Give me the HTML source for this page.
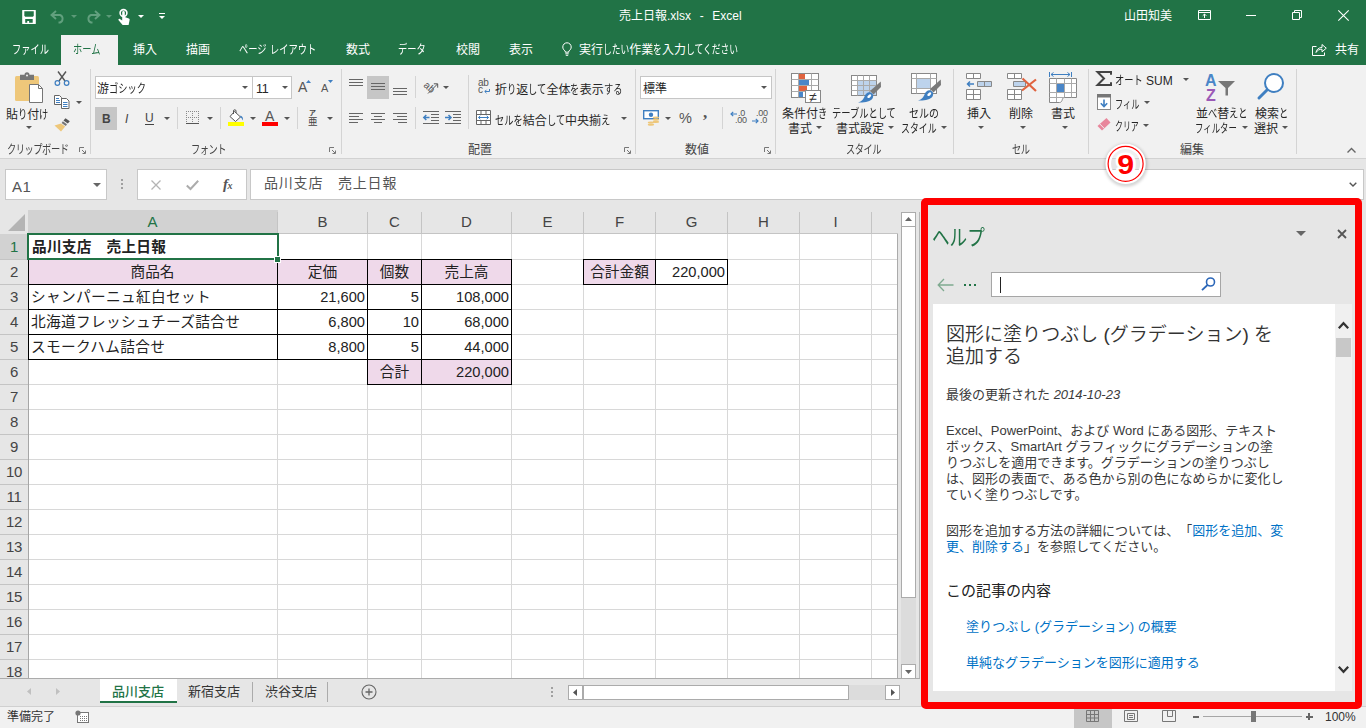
<!DOCTYPE html>
<html lang="ja">
<head>
<meta charset="utf-8">
<title>売上日報.xlsx - Excel</title>
<style>
*{box-sizing:border-box;margin:0;padding:0}
html,body{width:1366px;height:728px;overflow:hidden;background:#e6e6e6}
body{font-family:"Liberation Sans","Noto Sans CJK JP",sans-serif;font-size:12px;color:#262626;position:relative}
.a{position:absolute}
.t{position:absolute;white-space:nowrap;line-height:1}
svg{position:absolute;overflow:visible}
.k{display:inline-block;transform:scaleX(.77);transform-origin:0 50%}
.tab{position:absolute;top:43px;font-size:12px;color:#fff;white-space:nowrap;line-height:14px}
/* title */
#title{left:0;top:0;width:1366px;height:65px;background:#217346}
#title .t{color:#fff}
#hometab{left:61px;top:35px;width:57px;height:30px;background:#f1f1f1}
/* ribbon */
#ribbon{left:0;top:65px;width:1366px;height:94px;background:#f1f1f1;border-bottom:1px solid #d2d2d2}
.sep{position:absolute;width:1px;background:#d6d6d6;top:70px;height:85px}
.box{position:absolute;background:#fff;border:1px solid #c6c6c6}
.rt{position:absolute;white-space:nowrap;line-height:1;font-size:12px;color:#262626;letter-spacing:-0.6px}
.gl{position:absolute;white-space:nowrap;line-height:1;font-size:12px;color:#444;letter-spacing:-0.6px}
.dd{position:absolute;width:0;height:0;border-left:3px solid transparent;border-right:3px solid transparent;border-top:3px solid #555}
.lau{position:absolute;width:7px;height:7px}
.vs{position:absolute;width:1px;background:#d4d4d4}
.sel{position:absolute;background:#c6c6c6}
/* formula bar */
#fbar{left:0;top:159px;width:1366px;height:46px;background:#e6e6e6}
/* grid */
#grid{left:0;top:205px;width:920px;height:473px;background:#e6e6e6}
.ch{position:absolute;top:211px;height:22px;font-size:15px;color:#333;text-align:center;line-height:22px;border-right:1px solid #c8c8c8}
.rh{position:absolute;left:0;width:28px;height:25px;font-size:15px;color:#333;text-align:center;line-height:25px;border-bottom:1px solid #c8c8c8;letter-spacing:-0.5px}
.cell{position:absolute;height:25px;line-height:26px;font-size:14.67px;color:#222;white-space:nowrap;font-family:"Liberation Sans","Noto Sans CJK JP",sans-serif}
.b{font-weight:bold;padding-left:4px;letter-spacing:.25px}.l{padding-left:3px;letter-spacing:.35px}
.num{text-align:right;padding-right:2px}
.ctr{text-align:center}
.bl{position:absolute;background:#000}
/* help */
#helpborder{left:921px;top:198px;width:441px;height:511px;border:7px solid #fe0000;border-radius:5px;background:none;z-index:5}
#helpwhite{left:933px;top:304px;width:402px;height:387px;background:#fff}
#helpsb{left:1335px;top:304px;width:17px;height:387px;background:#f0f0f0}
.h{position:absolute;white-space:nowrap;line-height:1;color:#3a3a3a;font-size:13px;letter-spacing:0;text-spacing-trim:space-all}
.lnk{color:#0072c6}
/* bottom */
#tabs{left:0;top:678px;width:920px;height:28px;background:#e6e6e6;border-top:1px solid #ababab}
#status{left:0;top:706px;width:1366px;height:22px;background:#f1f1f1;border-top:1px solid #d0d0d0}
</style>
</head>
<body>
<!-- TITLE BAR -->
<div id="title" class="a"></div>
<div id="hometab" class="a"></div>

<!-- quick access -->
<svg class="a" style="left:22px;top:10px" width="14" height="14" viewBox="0 0 14 14.400"><rect x="0" y="0" width="14" height="14.400" rx=".6" fill="#fff"/><path d="M2.200 1.400H11.900V5.800L11 6.900H3.100L2.200 5.800Z" fill="#217346"/><path d="M3.100 9.300H10.800V13H7.100V11.400H5.200V13H3.100Z" fill="#217346"/></svg>
<svg class="a" style="left:50px;top:10px" width="16" height="13" viewBox="0 0 16 13"><path d="M6 1L1.5 5L6 9M1.5 5H10A4 4 0 0 1 10 12.5H8.5" fill="none" stroke="#62a07e" stroke-width="1.900"/></svg>
<div class="dd" style="left:71px;top:15px;border-top-color:#5c9a78"></div>
<svg class="a" style="left:85px;top:10px" width="16" height="13" viewBox="0 0 16 13"><path d="M10 1L14.5 5L10 9M14.5 5H6A4 4 0 0 0 6 12.5H7.5" fill="none" stroke="#62a07e" stroke-width="1.900"/></svg>
<div class="dd" style="left:106px;top:15px;border-top-color:#5c9a78"></div>
<svg class="a" style="left:117px;top:8px" width="14" height="18" viewBox="0 0 14 18"><circle cx="6.5" cy="5" r="3.4" fill="none" stroke="#fff" stroke-width="1.6"/><path d="M5.2 4.2a1.3 1.3 0 0 1 2.6 0V9l4 1.4c.8.3 1 .9.8 1.7L11.6 17H5.6L1.6 12.2c-.6-.8.4-1.8 1.3-1.2L5.2 12.6Z" fill="#fff"/></svg>
<div class="dd" style="left:138px;top:15px;border-top-color:#fff"></div>
<div class="a" style="left:159px;top:13px;width:6px;height:1px;background:#fff"></div>
<div class="dd" style="left:159px;top:16px;border-top-color:#fff"></div>
<!-- title text -->
<div class="t" style="left:619px;top:9px;font-size:12px;color:#fff;line-height:15px;word-spacing:1px">売上日報.xlsx&nbsp; -&nbsp; Excel</div>
<div class="t" style="left:1124px;top:9px;font-size:12px;color:#fff;line-height:14px">山田知美</div>
<svg class="a" style="left:1198px;top:10px" width="13" height="10" viewBox="0 0 13 10"><path d="M.5 .5H12.5V9.5H.5ZM.5 2.5H12.5M6.5 8V4M4.7 5.8L6.5 4L8.3 5.8" fill="none" stroke="#fff" stroke-width="1"/></svg>
<div class="a" style="left:1246px;top:15px;width:10px;height:1px;background:#fff"></div>
<svg class="a" style="left:1292px;top:10px" width="10" height="10" viewBox="0 0 10 10"><path d="M.5 2.5H7.5V9.5H.5ZM2.5 2.5V.5H9.5V7.5H7.5" fill="none" stroke="#fff" stroke-width="1"/></svg>
<svg class="a" style="left:1338px;top:10px" width="11" height="11" viewBox="0 0 11 11"><path d="M.3 .3L10.7 10.7M10.7 .3L.3 10.7" fill="none" stroke="#fff" stroke-width="1.1"/></svg>
<!-- tabs -->
<div class="tab" style="left:12px"><span class="k" style="margin-right:-0.92em">ファイル</span></div>
<div class="tab" style="left:73px;color:#217346"><span class="k" style="margin-right:-0.69em">ホーム</span></div>
<div class="tab" style="left:133px">挿入</div>
<div class="tab" style="left:186px">描画</div>
<div class="tab" style="left:239px"><span class="k" style="margin-right:-0.69em">ページ</span>&nbsp;<span class="k" style="margin-right:-1.15em">レイアウト</span></div>
<div class="tab" style="left:346px">数式</div>
<div class="tab" style="left:398px"><span class="k" style="margin-right:-0.69em">データ</span></div>
<div class="tab" style="left:456px">校閲</div>
<div class="tab" style="left:509px">表示</div>
<svg class="a" style="left:562px;top:42px" width="10" height="14" viewBox="0 0 10 14"><path d="M3.2 10.2V9C1.6 8 .8 6.600 .8 5A4.200 4.200 0 0 1 9.200 5C9.200 6.600 8.400 8 6.800 9V10.200ZM3.300 11.800H6.700M3.800 13.300H6.200" fill="none" stroke="#fff" stroke-width="1"/></svg>
<div class="tab" style="left:579px">実行<span class="k" style="transform:scaleX(0.73);margin-right:-0.81em">したい</span>作業<span class="k" style="transform:scaleX(0.73);margin-right:-0.27em">を</span>入力<span class="k" style="transform:scaleX(0.73);margin-right:-1.62em">してください</span></div>
<svg class="a" style="left:1312px;top:43px" width="15" height="13" viewBox="0 0 15 13"><path d="M4.500 3.500H.5V12.500H12.500V9.500M4 9.500C4.500 6 7 4.500 10 4.500V1.500L14.300 5.200L10 8.800V6.200C7.500 6.200 5.500 7 4 9.500Z" fill="none" stroke="#fff" stroke-width="1"/></svg>
<div class="tab" style="left:1335px">共有</div>
<!--TITLE-CONTENT-->

<!-- RIBBON -->
<div id="ribbon" class="a"></div>

<!-- clipboard group -->
<svg class="a" style="left:15px;top:73px" width="29" height="30" viewBox="0 0 29 30"><rect x="0" y="3" width="24" height="25" rx="1.500" fill="#eec77a"/><path d="M5 1.800H9.500A2.500 2.500 0 0 1 14.500 1.800H19V7H5Z" fill="#767676"/><circle cx="12" cy="2.600" r="1" fill="#f1f1f1"/><path d="M14.500 11.500H23.500L27.500 15.500V29.500H14.500Z" fill="#fff" stroke="#767676" stroke-width="1"/><path d="M23.500 11.500V15.500H27.500" fill="none" stroke="#767676" stroke-width="1"/></svg>
<div class="rt" style="left:6px;top:109px;letter-spacing:0">貼<span class="k" style="margin-right:-0.23em">り</span>付<span class="k" style="margin-right:-0.23em">け</span></div>
<div class="dd" style="left:26px;top:126px"></div>
<svg class="a" style="left:54px;top:71px" width="16" height="15" viewBox="0 0 16 15"><path d="M4 .5L11 10M12 .5L5 10" fill="none" stroke="#555" stroke-width="1.400"/><circle cx="3.400" cy="12" r="2.300" fill="none" stroke="#3f7fc1" stroke-width="1.200"/><circle cx="12.600" cy="12" r="2.300" fill="none" stroke="#3f7fc1" stroke-width="1.200"/></svg>
<svg class="a" style="left:54px;top:95px" width="16" height="14" viewBox="0 0 16 14"><path d="M.5 .5H5.500L7.500 2.500V9.500H.5Z" fill="#fff" stroke="#666" stroke-width="1"/><path d="M2 3.500H5M2 5.500H6M2 7.500H6" stroke="#3f7fc1" stroke-width="1"/><path d="M7.500 3.500H12.500L15 6V13.500H7.500Z" fill="#fff" stroke="#666" stroke-width="1"/><path d="M9 7.500H13.500M9 9.500H13.500M9 11.500H13.500" stroke="#3f7fc1" stroke-width="1"/></svg>
<div class="dd" style="left:76px;top:101px"></div>
<svg class="a" style="left:54px;top:117px" width="17" height="15" viewBox="0 0 17 15"><path d="M11.500 1.200L15.800 4.300L13.800 6.600L9.500 3.500Z" fill="#555"/><path d="M8.800 4.200L13 7.300L11.800 9L7.600 5.900Z" fill="#777"/><path d="M7 6.500L11.200 9.600L7 14.500L.5 8.500Z" fill="#eec77a"/></svg>
<div class="gl" style="left:7px;top:144px"><span class="k" style="margin-right:-1.61em">クリップボード</span></div>
<svg class="a" style="left:79px;top:147px" width="7" height="7" viewBox="0 0 7 7"><path d="M.5 5V.5H5" fill="none" stroke="#777" stroke-width="1"/><path d="M3 3L6 6M6.5 3.500V6.500H3.500" fill="none" stroke="#777" stroke-width="1"/></svg>
<div class="vs" style="left:90px;top:69px;height:85px"></div>
<!-- font group -->
<div class="box" style="left:95px;top:76px;width:158px;height:23px"></div>
<div class="box" style="left:252px;top:76px;width:40px;height:23px"></div>
<div class="rt" style="left:97px;top:83px;letter-spacing:0">游<span class="k" style="margin-right:-0.92em">ゴシック</span></div>
<div class="dd" style="left:242px;top:86px"></div>
<div class="rt" style="left:256px;top:83px;font-size:12.500px;letter-spacing:-.3px">11</div>
<div class="dd" style="left:282px;top:86px"></div>
<div class="rt" style="left:298px;top:80px;font-size:14px;letter-spacing:0;color:#555">A</div>
<svg class="a" style="left:306px;top:80px" width="5" height="3" viewBox="0 0 5 3"><path d="M0 3L2.500 0L5 3Z" fill="#3f7fc1"/></svg>
<div class="rt" style="left:321px;top:83px;font-size:11px;letter-spacing:0;color:#555">A</div>
<svg class="a" style="left:328px;top:80px" width="5" height="3" viewBox="0 0 5 3"><path d="M0 0L2.500 3L5 0Z" fill="#3f7fc1"/></svg>
<div class="sel" style="left:95px;top:107px;width:22px;height:23px"></div>
<div class="rt" style="left:102px;top:113px;font-size:12px;font-weight:bold;letter-spacing:0;color:#444">B</div>
<div class="rt" style="left:125px;top:113px;font-size:12px;font-style:italic;letter-spacing:0;color:#444">I</div>
<div class="rt" style="left:145px;top:113px;font-size:12px;letter-spacing:0;color:#444;border-bottom:1px solid #444;padding-bottom:0;line-height:11px">U</div>
<div class="dd" style="left:164px;top:117px"></div>
<div class="vs" style="left:177px;top:107px;height:22px"></div>
<svg class="a" style="left:186px;top:111px" width="13" height="13" viewBox="0 0 13 13"><path d="M0 .5H13M0 6.500H13M.5 0V12M6.500 0V12M12.500 0V12" fill="none" stroke="#8a8a8a" stroke-width="1" stroke-dasharray="1 1" shape-rendering="crispEdges"/><path d="M0 12.500H13" stroke="#555" stroke-width="1"/></svg>
<div class="dd" style="left:207px;top:117px"></div>
<div class="vs" style="left:220px;top:107px;height:22px"></div>
<svg class="a" style="left:228px;top:110px" width="17" height="16" viewBox="0 0 17 16"><path d="M6.500 1.500L12.500 7L7.500 11.500L2 6.500Z" fill="#fff" stroke="#555" stroke-width="1"/><path d="M5.500 4V1A1.200 1.200 0 0 1 8 1V3" fill="none" stroke="#555" stroke-width="1"/><path d="M12.500 5.500C15 6.500 15.500 9 14.500 10.500C14 8.500 13.500 7.800 12 7.200Z" fill="#3f7fc1"/><rect x="0" y="12" width="16" height="4" fill="#ffff00"/></svg>
<div class="dd" style="left:250px;top:117px"></div>
<div class="rt" style="left:265px;top:109px;font-size:14px;letter-spacing:0;color:#555">A</div>
<div class="a" style="left:262px;top:122px;width:16px;height:4px;background:#ff0000"></div>
<div class="dd" style="left:284px;top:117px"></div>
<div class="vs" style="left:297px;top:107px;height:22px"></div>
<div class="rt" style="left:309px;top:109px;font-size:7px;letter-spacing:0;color:#444;font-weight:bold">ア</div>
<div class="rt" style="left:308px;top:117px;font-size:9.500px;letter-spacing:0;color:#444">亜</div>
<div class="dd" style="left:327px;top:117px"></div>
<div class="gl" style="left:191px;top:144px"><span class="k" style="margin-right:-0.92em">フォント</span></div>
<svg class="a" style="left:329px;top:147px" width="7" height="7" viewBox="0 0 7 7"><path d="M.5 5V.5H5" fill="none" stroke="#777" stroke-width="1"/><path d="M3 3L6 6M6.5 3.500V6.500H3.500" fill="none" stroke="#777" stroke-width="1"/></svg>
<div class="vs" style="left:341px;top:69px;height:85px"></div>

<!-- alignment group -->
<div class="a" style="left:349px;top:79px;width:14px;height:1px;background:#666"></div><div class="a" style="left:349px;top:82px;width:14px;height:1px;background:#666"></div><div class="a" style="left:349px;top:85px;width:14px;height:1px;background:#666"></div>
<div class="sel" style="left:367px;top:76px;width:22px;height:23px"></div>
<div class="a" style="left:371px;top:83px;width:14px;height:1px;background:#666"></div><div class="a" style="left:371px;top:86px;width:14px;height:1px;background:#666"></div><div class="a" style="left:371px;top:89px;width:14px;height:1px;background:#666"></div><div class="a" style="left:393px;top:88px;width:14px;height:1px;background:#666"></div><div class="a" style="left:393px;top:91px;width:14px;height:1px;background:#666"></div><div class="a" style="left:393px;top:94px;width:14px;height:1px;background:#666"></div>
<div class="vs" style="left:415px;top:76px;height:22px"></div>
<svg class="a" style="left:423px;top:79px" width="17" height="16" viewBox="0 0 17 16"><text x="0" y="0" font-size="10" font-family="Liberation Sans,sans-serif" fill="#555" transform="translate(0 7) rotate(42)">ab</text><path d="M5 14.500L14.500 5M10.800 4.800L14.700 4.800L14.700 8.700" fill="none" stroke="#555" stroke-width="1"/></svg>
<div class="dd" style="left:443px;top:86px"></div>
<div class="vs" style="left:468px;top:75px;height:54px"></div>
<div class="a" style="left:349px;top:113px;width:14px;height:1px;background:#666"></div><div class="a" style="left:349px;top:116px;width:10px;height:1px;background:#666"></div><div class="a" style="left:349px;top:119px;width:14px;height:1px;background:#666"></div><div class="a" style="left:349px;top:122px;width:9px;height:1px;background:#666"></div><div class="a" style="left:371px;top:113px;width:14px;height:1px;background:#666"></div><div class="a" style="left:374px;top:116px;width:8px;height:1px;background:#666"></div><div class="a" style="left:371px;top:119px;width:14px;height:1px;background:#666"></div><div class="a" style="left:374px;top:122px;width:8px;height:1px;background:#666"></div><div class="a" style="left:393px;top:113px;width:14px;height:1px;background:#666"></div><div class="a" style="left:397px;top:116px;width:10px;height:1px;background:#666"></div><div class="a" style="left:393px;top:119px;width:14px;height:1px;background:#666"></div><div class="a" style="left:398px;top:122px;width:9px;height:1px;background:#666"></div>
<div class="vs" style="left:415px;top:107px;height:22px"></div>
<svg class="a" style="left:423px;top:111px" width="16" height="13" viewBox="0 0 16 13"><path d="M0 .5H16M8 3.500H16M8 6.500H16M8 9.500H16M0 12.500H16" stroke="#666" stroke-width="1"/><path d="M6.500 6.500H.8M3.300 4L.8 6.500L3.300 9" fill="none" stroke="#3f7fc1" stroke-width="1.500"/></svg>
<svg class="a" style="left:445px;top:111px" width="16" height="13" viewBox="0 0 16 13"><path d="M0 .5H16M8 3.500H16M8 6.500H16M8 9.500H16M0 12.500H16" stroke="#666" stroke-width="1"/><path d="M0 6.500H6M3.500 4L6 6.500L3.500 9" fill="none" stroke="#3f7fc1" stroke-width="1.500"/></svg>
<div class="rt" style="left:478px;top:79px;font-size:10px;letter-spacing:-.3px;color:#555;line-height:7px">ab<br>c</div>
<svg class="a" style="left:484px;top:89px" width="6" height="5" viewBox="0 0 6 5"><path d="M5.500 0V2.500H1M2.500 .8L.8 2.500L2.500 4.200" fill="none" stroke="#3f7fc1" stroke-width="1"/></svg>
<div class="rt" style="left:495px;top:84px;letter-spacing:0">折<span class="k" style="margin-right:-0.23em">り</span>返<span class="k" style="margin-right:-0.46em">して</span>全体<span class="k" style="margin-right:-0.23em">を</span>表示<span class="k" style="margin-right:-0.46em">する</span></div>
<svg class="a" style="left:476px;top:110px" width="15" height="15" viewBox="0 0 15 15"><path d="M.5 .5H14.500V14.500H.5ZM.5 4.500H14.500M.5 10.500H14.500M5 .5V4.500M10 .5V4.500M5 10.500V14.500M10 10.500V14.500" fill="#fff" stroke="#666" stroke-width="1"/><path d="M2.500 7.500H12.500M4.300 5.800L2.500 7.500L4.300 9.200M10.700 5.800L12.500 7.500L10.700 9.200" fill="none" stroke="#3f7fc1" stroke-width="1"/></svg>
<div class="rt" style="left:495px;top:115px;letter-spacing:0"><span class="k" style="margin-right:-0.69em">セルを</span>結合<span class="k" style="margin-right:-0.46em">して</span>中央揃<span class="k" style="margin-right:-0.23em">え</span></div>
<div class="dd" style="left:621px;top:117px"></div>
<div class="gl" style="left:468px;top:144px;letter-spacing:0">配置</div>
<svg class="a" style="left:624px;top:147px" width="7" height="7" viewBox="0 0 7 7"><path d="M.5 5V.5H5" fill="none" stroke="#777" stroke-width="1"/><path d="M3 3L6 6M6.500 3.500V6.500H3.500" fill="none" stroke="#777" stroke-width="1"/></svg>
<div class="vs" style="left:635px;top:69px;height:85px"></div>
<!-- number group -->
<div class="box" style="left:640px;top:76px;width:132px;height:23px"></div>
<div class="rt" style="left:643px;top:83px;letter-spacing:0">標準</div>
<div class="dd" style="left:761px;top:86px"></div>
<svg class="a" style="left:643px;top:110px" width="17" height="17" viewBox="0 0 17 17"><rect x=".7" y=".7" width="14.600" height="8" fill="#fff" stroke="#3f7fc1" stroke-width="1.400"/><circle cx="8" cy="4.700" r="2.200" fill="#3f7fc1"/><g fill="#eec77a"><ellipse cx="13" cy="7.500" rx="3.200" ry="1.100"/><ellipse cx="13" cy="9.700" rx="3.200" ry="1.100"/><ellipse cx="13" cy="11.900" rx="3.200" ry="1.100"/><ellipse cx="8" cy="12.500" rx="3.200" ry="1.100"/><ellipse cx="8" cy="14.700" rx="3.200" ry="1.100"/></g></svg>
<div class="dd" style="left:665px;top:117px"></div>
<div class="rt" style="left:679px;top:111px;font-size:14.500px;letter-spacing:0;color:#555">%</div>
<div class="rt" style="left:703px;top:104px;font-size:17px;letter-spacing:0;color:#555;font-family:'Liberation Serif',serif;font-weight:bold">,</div>
<div class="vs" style="left:722px;top:107px;height:22px"></div>
<div class="rt" style="left:735px;top:110px;font-size:9px;letter-spacing:-.3px;color:#555;line-height:7px;text-align:right;width:10px">.0<br>.00</div>
<svg class="a" style="left:730px;top:111px" width="7" height="6" viewBox="0 0 7 6"><path d="M7 3H1M3.200 .8L1 3L3.200 5.200" fill="none" stroke="#3f7fc1" stroke-width="1.200"/></svg>
<div class="rt" style="left:756px;top:110px;font-size:9px;letter-spacing:-.3px;color:#555;line-height:7px;text-align:right;width:11px">.00<br>.0</div>
<svg class="a" style="left:752px;top:118px" width="7" height="6" viewBox="0 0 7 6"><path d="M0 3H6M3.800 .8L6 3L3.800 5.200" fill="none" stroke="#3f7fc1" stroke-width="1.200"/></svg>
<div class="gl" style="left:685px;top:144px;letter-spacing:0">数値</div>
<svg class="a" style="left:764px;top:147px" width="7" height="7" viewBox="0 0 7 7"><path d="M.5 5V.5H5" fill="none" stroke="#777" stroke-width="1"/><path d="M3 3L6 6M6.500 3.500V6.500H3.500" fill="none" stroke="#777" stroke-width="1"/></svg>
<div class="vs" style="left:775px;top:69px;height:85px"></div>

<!-- styles group -->
<svg class="a" style="left:791px;top:73px" width="31" height="31" viewBox="0 0 31 31"><rect x=".5" y=".5" width="27" height="24" fill="#fff" stroke="#888"/><path d="M.5 6.500H27.500M.5 12.500H27.500M.5 18.500H27.500M7.500 .5V24.500M20.500 .5V24.500" stroke="#aaa" stroke-width="1" fill="none"/><rect x="8" y="1" width="6" height="5" fill="#e0633f"/><rect x="8" y="7" width="10" height="5" fill="#4a86c8"/><rect x="8" y="13" width="8" height="5" fill="#e0633f"/><rect x="8" y="19" width="4" height="5" fill="#4a86c8"/><rect x="14.500" y="17.500" width="15" height="12" fill="#fff" stroke="#888"/><text x="22" y="28.500" font-size="14" text-anchor="middle" font-family="Liberation Sans,sans-serif" fill="#333">≠</text></svg>
<div class="rt" style="left:782px;top:108px;letter-spacing:0">条件付<span class="k" style="margin-right:-0.23em">き</span></div>
<div class="rt" style="left:788px;top:123px;letter-spacing:0">書式</div>
<div class="dd" style="left:816px;top:126px"></div>
<svg class="a" style="left:851px;top:75px" width="31" height="29" viewBox="0 0 31 29"><rect x=".5" y=".5" width="25" height="20" fill="#fff" stroke="#888"/><rect x="7" y="6" width="18" height="14" fill="#bdd3ec"/><path d="M.5 5.500H25.500M.5 10.500H25.500M.5 15.500H25.500M6.500 .5V20.500M12.500 .5V20.500M18.500 .5V20.500" stroke="#aaa" stroke-width="1" fill="none"/><path d="M29.800 6.500L30 12L22.500 19.500L19 16Z" fill="#7a7a7a"/><path d="M7 27.500C11 26.500 12.500 24 13.500 21.500C14.500 18.500 17 16.800 19.500 17.500C22 18.300 23 21 21.500 23.500C19.500 26.500 13 28 7 27.500Z" fill="#3f7fc1"/><ellipse cx="18.300" cy="21.200" rx="2.300" ry="1.300" fill="#fff" transform="rotate(-40 18.300 21.200)"/></svg>
<div class="rt" style="left:832px;top:108px;letter-spacing:0"><span class="k" style="margin-right:-1.61em">テーブルとして</span></div>
<div class="rt" style="left:836px;top:123px;letter-spacing:0">書式設定</div>
<div class="dd" style="left:888px;top:126px"></div>
<svg class="a" style="left:911px;top:73px" width="31" height="29" viewBox="0 0 31 29"><rect x=".5" y=".5" width="25" height="20" fill="#fff" stroke="#888"/><path d="M.5 5.500H25.500M.5 15.500H25.500M5.500 .5V20.500M19.500 .5V20.500" stroke="#aaa" stroke-width="1" fill="none"/><rect x="6" y="6" width="13" height="9" fill="#bdd3ec"/><path d="M29.800 6.500L30 12L22.500 19.500L19 16Z" fill="#7a7a7a"/><path d="M7 27.500C11 26.500 12.500 24 13.500 21.500C14.500 18.500 17 16.800 19.500 17.500C22 18.300 23 21 21.500 23.500C19.500 26.500 13 28 7 27.500Z" fill="#3f7fc1"/><ellipse cx="18.300" cy="21.200" rx="2.300" ry="1.300" fill="#fff" transform="rotate(-40 18.300 21.200)"/></svg>
<div class="rt" style="left:909px;top:108px;letter-spacing:0"><span class="k" style="transform:scaleX(0.83);margin-right:-0.51em">セルの</span></div>
<div class="rt" style="left:901px;top:123px;letter-spacing:0"><span class="k" style="transform:scaleX(0.74);margin-right:-1.04em">スタイル</span></div>
<div class="dd" style="left:941px;top:126px"></div>
<div class="gl" style="left:846px;top:144px"><span class="k" style="margin-right:-0.92em">スタイル</span></div>
<div class="vs" style="left:953px;top:69px;height:85px"></div>
<!-- cells group -->
<svg class="a" style="left:966px;top:73px" width="27" height="28" viewBox="0 0 27 28"><path d="M.5 .5H14.500V5.500H.5ZM7.500 .5V5.500" fill="#fff" stroke="#888"/><path d="M11.500 8.500H25.500V13.500H11.500ZM18.500 8.500V13.500" fill="#bdd3ec" stroke="#888"/><path d="M8 11H1.500M4 8.500L1.500 11L4 13.500" fill="none" stroke="#3f7fc1" stroke-width="1.500"/><path d="M.5 16.500H14.500V26.500H.5ZM7.500 16.500V26.500M.5 21.500H14.500" fill="#fff" stroke="#888"/></svg>
<div class="rt" style="left:967px;top:108px;letter-spacing:0">挿入</div>
<div class="dd" style="left:978px;top:126px"></div>
<svg class="a" style="left:1007px;top:73px" width="30" height="28" viewBox="0 0 30 28"><path d="M.5 .5H14.500V5.500H.5ZM7.500 .5V5.500" fill="#fff" stroke="#888"/><path d="M6.500 8.500H18.500V13.500H6.500Z" fill="#bdd3ec" stroke="#888"/><path d="M.5 16.500H14.500V26.500H.5ZM7.500 16.500V26.500M.5 21.500H14.500" fill="#fff" stroke="#888"/><path d="M15.500 5.500L29 18M29 6.500L15 17.500" fill="none" stroke="#e0633f" stroke-width="2.200"/></svg>
<div class="rt" style="left:1009px;top:108px;letter-spacing:0">削除</div>
<div class="dd" style="left:1020px;top:126px"></div>
<svg class="a" style="left:1049px;top:72px" width="29" height="31" viewBox="0 0 29 31"><path d="M.5 0V5M22.500 0V5M2 2.500H21M4.500 .5L2 2.500L4.500 4.500M18.500 .5L21 2.500L18.500 4.500" fill="none" stroke="#3f7fc1" stroke-width="1"/><path d="M.5 6.500H27.500V25.500H15C14 25.500 13.500 27 13 28.500C12.500 30 11.500 30.500 10.500 30.500H.5Z" fill="#fff" stroke="#888"/><path d="M.5 11.500H27.500M.5 20.500H27.500M7.500 6.500V30M15.500 6.500V25.500M22.500 6.500V25.500M.5 25.500H15" stroke="#aaa" fill="none"/><rect x="8" y="12" width="7" height="8" fill="#4a86c8"/></svg>
<div class="rt" style="left:1051px;top:108px;letter-spacing:0">書式</div>
<div class="dd" style="left:1062px;top:126px"></div>
<div class="gl" style="left:1012px;top:144px"><span class="k" style="margin-right:-0.46em">セル</span></div>
<div class="vs" style="left:1088px;top:69px;height:85px"></div>
<!-- editing group -->
<svg class="a" style="left:1096px;top:71px" width="16" height="15" viewBox="0 0 16 15"><path d="M15 3.800V1H1.500L8 7.500L1.500 14H15V11.200" fill="none" stroke="#444" stroke-width="2"/></svg>
<div class="rt" style="left:1115px;top:75px;letter-spacing:0"><span class="k" style="margin-right:-0.69em">オート</span> SUM</div>
<div class="dd" style="left:1183px;top:78px"></div>
<svg class="a" style="left:1097px;top:94px" width="14" height="16" viewBox="0 0 14 16"><rect x=".5" y=".5" width="13" height="15" fill="#fff" stroke="#888"/><rect x="0" y="0" width="14" height="3.500" fill="#777"/><path d="M7 5.500V12.500M3.800 9.300L7 12.500L10.200 9.300" fill="none" stroke="#3f7fc1" stroke-width="1.600"/></svg>
<div class="rt" style="left:1115px;top:99px;letter-spacing:0"><span class="k" style="transform:scaleX(0.68);margin-right:-0.96em">フィル</span></div>
<div class="dd" style="left:1144px;top:101px"></div>
<svg class="a" style="left:1097px;top:118px" width="14" height="13" viewBox="0 0 14 13"><path d="M9.500 0L13.500 4.500L5 12.500L.5 8Z" fill="#e8879c"/><path d="M2.700 5.900L7.200 10.400" stroke="#f1f1f1" stroke-width="1"/></svg>
<div class="rt" style="left:1115px;top:121px;letter-spacing:0"><span class="k" style="transform:scaleX(0.66);margin-right:-1.02em">クリア</span></div>
<div class="dd" style="left:1143px;top:124px"></div>
<div class="rt" style="left:1205px;top:73px;font-size:16px;letter-spacing:0;color:#4a86c8;font-weight:bold">A</div>
<div class="rt" style="left:1206px;top:88px;font-size:16px;letter-spacing:0;color:#9b59b6;font-weight:bold">Z</div>
<svg class="a" style="left:1218px;top:81px" width="17" height="15" viewBox="0 0 17 15"><path d="M0 0H17L10 7V14.500H7.500V7Z" fill="#777"/></svg>
<div class="rt" style="left:1196px;top:108px;letter-spacing:0">並<span class="k" style="margin-right:-0.23em">べ</span>替<span class="k" style="margin-right:-0.46em">えと</span></div>
<div class="rt" style="left:1195px;top:123px;letter-spacing:0"><span class="k" style="transform:scaleX(0.7);margin-right:-1.50em">フィルター</span></div>
<div class="dd" style="left:1242px;top:126px"></div>
<svg class="a" style="left:1257px;top:73px" width="28" height="28" viewBox="0 0 28 28"><path d="M2 25L10 17" stroke="#3f7fc1" stroke-width="3" stroke-linecap="round"/><circle cx="17" cy="10" r="9" fill="#fff" stroke="#3f7fc1" stroke-width="2"/></svg>
<div class="rt" style="left:1255px;top:108px;letter-spacing:0">検索<span class="k" style="margin-right:-0.23em">と</span></div>
<div class="rt" style="left:1254px;top:123px;letter-spacing:0">選択</div>
<div class="dd" style="left:1282px;top:126px"></div>
<div class="gl" style="left:1180px;top:144px;letter-spacing:0">編集</div>
<div class="vs" style="left:1296px;top:69px;height:85px"></div>
<svg class="a" style="left:1347px;top:147px" width="9" height="6" viewBox="0 0 9 6"><path d="M.5 5.500L4.500 1.500L8.500 5.500" fill="none" stroke="#666" stroke-width="1.400"/></svg>
<!--RIBBON-CONTENT-->

<!-- FORMULA BAR -->
<div id="fbar" class="a"></div>

<div class="box" style="left:5px;top:169px;width:102px;height:31px;border-color:#c8c8c8"></div>
<div class="t" style="left:12px;top:179px;font-size:15px;color:#555;letter-spacing:.5px">A1</div>
<div class="dd" style="left:93px;top:183px;border-width:4px 4px 0 4px;border-top-color:#666"></div>
<div class="a" style="left:121px;top:179px;width:2px;height:2px;background:#a0a0a0;box-shadow:0 4px 0 #a0a0a0,0 8px 0 #a0a0a0"></div>
<div class="box" style="left:137px;top:169px;width:110px;height:31px;border-color:#c8c8c8"></div>
<svg class="a" style="left:151px;top:180px" width="10" height="10" viewBox="0 0 10 10"><path d="M.5 .5L9.500 9.500M9.500 .5L.5 9.500" stroke="#b4b4b4" stroke-width="1.300" fill="none"/></svg>
<svg class="a" style="left:186px;top:180px" width="13" height="10" viewBox="0 0 13 10"><path d="M.8 5.500L4.500 9L12.200 .8" stroke="#acacac" stroke-width="2" fill="none"/></svg>
<div class="t" style="left:223px;top:177px;font-size:15px;color:#555;font-family:'Liberation Serif',serif;font-style:italic;font-weight:bold;letter-spacing:-.5px">f<span style="font-size:10px">x</span></div>
<div class="box" style="left:250px;top:169px;width:1114px;height:31px;border-color:#c8c8c8"></div>
<div class="t" style="left:264px;top:175px;font-size:14px;color:#555;letter-spacing:.8px;line-height:16px">品川支店　売上日報</div>
<svg class="a" style="left:1349px;top:182px" width="8" height="5" viewBox="0 0 8 5"><path d="M.7 .7L4 4L7.300 .7" stroke="#555" stroke-width="1.400" fill="none"/></svg>
<!-- badge -->
<svg class="a" style="left:1100px;top:138px" width="52" height="52" viewBox="0 0 52 52"><defs><filter id="bs" x="-30%" y="-30%" width="160%" height="160%"><feGaussianBlur stdDeviation="1.800"/></filter></defs><circle cx="26" cy="27" r="19.500" fill="none" stroke="#000" stroke-opacity=".18" stroke-width="4" filter="url(#bs)"/><circle cx="25.600" cy="25.800" r="17.300" fill="none" stroke="#fff" stroke-width="5.600"/><circle cx="25.600" cy="25.800" r="17.500" fill="none" stroke="#ff0000" stroke-width="1.200"/><text x="23.700" y="35.600" font-size="28" font-weight="bold" text-anchor="middle" transform="scale(1.08 1)" font-family="Liberation Sans,sans-serif" fill="#ff0000" stroke="#fff" stroke-width="5" stroke-linejoin="round" paint-order="stroke">9</text></svg>
<!--FBAR-CONTENT-->

<!-- GRID -->
<div class="a" style="left:29px;top:234px;width:869px;height:444px;background:#fff"></div>
<div class="a" style="left:0;top:210px;width:898px;height:24px;background:#e6e6e6"></div>
<div class="a" style="left:28px;top:210px;width:250px;height:23px;background:#d2d2d2"></div>
<svg class="a" style="left:8px;top:214px" width="17" height="17" viewBox="0 0 17 17"><path d="M17 0V17H0Z" fill="#b4b4b4"/></svg>
<div class="a" style="left:28px;top:210px;width:249px;height:24px;line-height:24px;text-align:center;font-size:15px;color:#217346">A</div>
<div class="a" style="left:278px;top:210px;width:89px;height:24px;line-height:24px;text-align:center;font-size:15px;color:#444">B</div>
<div class="a" style="left:368px;top:210px;width:53px;height:24px;line-height:24px;text-align:center;font-size:15px;color:#444">C</div>
<div class="a" style="left:422px;top:210px;width:89px;height:24px;line-height:24px;text-align:center;font-size:15px;color:#444">D</div>
<div class="a" style="left:512px;top:210px;width:71px;height:24px;line-height:24px;text-align:center;font-size:15px;color:#444">E</div>
<div class="a" style="left:584px;top:210px;width:71px;height:24px;line-height:24px;text-align:center;font-size:15px;color:#444">F</div>
<div class="a" style="left:656px;top:210px;width:71px;height:24px;line-height:24px;text-align:center;font-size:15px;color:#444">G</div>
<div class="a" style="left:728px;top:210px;width:71px;height:24px;line-height:24px;text-align:center;font-size:15px;color:#444">H</div>
<div class="a" style="left:800px;top:210px;width:71px;height:24px;line-height:24px;text-align:center;font-size:15px;color:#444">I</div>
<div class="a" style="left:277px;top:212px;width:1px;height:22px;background:#c4c4c4"></div>
<div class="a" style="left:367px;top:212px;width:1px;height:22px;background:#c4c4c4"></div>
<div class="a" style="left:421px;top:212px;width:1px;height:22px;background:#c4c4c4"></div>
<div class="a" style="left:511px;top:212px;width:1px;height:22px;background:#c4c4c4"></div>
<div class="a" style="left:583px;top:212px;width:1px;height:22px;background:#c4c4c4"></div>
<div class="a" style="left:655px;top:212px;width:1px;height:22px;background:#c4c4c4"></div>
<div class="a" style="left:727px;top:212px;width:1px;height:22px;background:#c4c4c4"></div>
<div class="a" style="left:799px;top:212px;width:1px;height:22px;background:#c4c4c4"></div>
<div class="a" style="left:871px;top:212px;width:1px;height:22px;background:#c4c4c4"></div>
<div class="a" style="left:277px;top:234px;width:1px;height:444px;background:#d8d8d8"></div>
<div class="a" style="left:367px;top:234px;width:1px;height:444px;background:#d8d8d8"></div>
<div class="a" style="left:421px;top:234px;width:1px;height:444px;background:#d8d8d8"></div>
<div class="a" style="left:511px;top:234px;width:1px;height:444px;background:#d8d8d8"></div>
<div class="a" style="left:583px;top:234px;width:1px;height:444px;background:#d8d8d8"></div>
<div class="a" style="left:655px;top:234px;width:1px;height:444px;background:#d8d8d8"></div>
<div class="a" style="left:727px;top:234px;width:1px;height:444px;background:#d8d8d8"></div>
<div class="a" style="left:799px;top:234px;width:1px;height:444px;background:#d8d8d8"></div>
<div class="a" style="left:871px;top:234px;width:1px;height:444px;background:#d8d8d8"></div>
<div class="a" style="left:0;top:234px;width:28px;height:444px;background:#e6e6e6"></div>
<div class="a" style="left:0;top:234px;width:27px;height:25px;background:#d2d2d2"></div>
<div class="a" style="left:0;top:234px;width:28px;height:25px;line-height:26px;text-align:center;font-size:15px;color:#217346;letter-spacing:-.3px">1</div>
<div class="a" style="left:0;top:259px;width:28px;height:1px;background:#c4c4c4"></div>
<div class="a" style="left:28px;top:259px;width:870px;height:1px;background:#d8d8d8"></div>
<div class="a" style="left:0;top:259px;width:28px;height:25px;line-height:26px;text-align:center;font-size:15px;color:#444;letter-spacing:-.3px">2</div>
<div class="a" style="left:0;top:284px;width:28px;height:1px;background:#c4c4c4"></div>
<div class="a" style="left:28px;top:284px;width:870px;height:1px;background:#d8d8d8"></div>
<div class="a" style="left:0;top:284px;width:28px;height:25px;line-height:26px;text-align:center;font-size:15px;color:#444;letter-spacing:-.3px">3</div>
<div class="a" style="left:0;top:309px;width:28px;height:1px;background:#c4c4c4"></div>
<div class="a" style="left:28px;top:309px;width:870px;height:1px;background:#d8d8d8"></div>
<div class="a" style="left:0;top:309px;width:28px;height:25px;line-height:26px;text-align:center;font-size:15px;color:#444;letter-spacing:-.3px">4</div>
<div class="a" style="left:0;top:334px;width:28px;height:1px;background:#c4c4c4"></div>
<div class="a" style="left:28px;top:334px;width:870px;height:1px;background:#d8d8d8"></div>
<div class="a" style="left:0;top:334px;width:28px;height:25px;line-height:26px;text-align:center;font-size:15px;color:#444;letter-spacing:-.3px">5</div>
<div class="a" style="left:0;top:359px;width:28px;height:1px;background:#c4c4c4"></div>
<div class="a" style="left:28px;top:359px;width:870px;height:1px;background:#d8d8d8"></div>
<div class="a" style="left:0;top:359px;width:28px;height:25px;line-height:26px;text-align:center;font-size:15px;color:#444;letter-spacing:-.3px">6</div>
<div class="a" style="left:0;top:384px;width:28px;height:1px;background:#c4c4c4"></div>
<div class="a" style="left:28px;top:384px;width:870px;height:1px;background:#d8d8d8"></div>
<div class="a" style="left:0;top:384px;width:28px;height:25px;line-height:26px;text-align:center;font-size:15px;color:#444;letter-spacing:-.3px">7</div>
<div class="a" style="left:0;top:409px;width:28px;height:1px;background:#c4c4c4"></div>
<div class="a" style="left:28px;top:409px;width:870px;height:1px;background:#d8d8d8"></div>
<div class="a" style="left:0;top:409px;width:28px;height:25px;line-height:26px;text-align:center;font-size:15px;color:#444;letter-spacing:-.3px">8</div>
<div class="a" style="left:0;top:434px;width:28px;height:1px;background:#c4c4c4"></div>
<div class="a" style="left:28px;top:434px;width:870px;height:1px;background:#d8d8d8"></div>
<div class="a" style="left:0;top:434px;width:28px;height:25px;line-height:26px;text-align:center;font-size:15px;color:#444;letter-spacing:-.3px">9</div>
<div class="a" style="left:0;top:459px;width:28px;height:1px;background:#c4c4c4"></div>
<div class="a" style="left:28px;top:459px;width:870px;height:1px;background:#d8d8d8"></div>
<div class="a" style="left:0;top:459px;width:28px;height:25px;line-height:26px;text-align:center;font-size:15px;color:#444;letter-spacing:-.3px">10</div>
<div class="a" style="left:0;top:484px;width:28px;height:1px;background:#c4c4c4"></div>
<div class="a" style="left:28px;top:484px;width:870px;height:1px;background:#d8d8d8"></div>
<div class="a" style="left:0;top:484px;width:28px;height:25px;line-height:26px;text-align:center;font-size:15px;color:#444;letter-spacing:-.3px">11</div>
<div class="a" style="left:0;top:509px;width:28px;height:1px;background:#c4c4c4"></div>
<div class="a" style="left:28px;top:509px;width:870px;height:1px;background:#d8d8d8"></div>
<div class="a" style="left:0;top:509px;width:28px;height:25px;line-height:26px;text-align:center;font-size:15px;color:#444;letter-spacing:-.3px">12</div>
<div class="a" style="left:0;top:534px;width:28px;height:1px;background:#c4c4c4"></div>
<div class="a" style="left:28px;top:534px;width:870px;height:1px;background:#d8d8d8"></div>
<div class="a" style="left:0;top:534px;width:28px;height:25px;line-height:26px;text-align:center;font-size:15px;color:#444;letter-spacing:-.3px">13</div>
<div class="a" style="left:0;top:559px;width:28px;height:1px;background:#c4c4c4"></div>
<div class="a" style="left:28px;top:559px;width:870px;height:1px;background:#d8d8d8"></div>
<div class="a" style="left:0;top:559px;width:28px;height:25px;line-height:26px;text-align:center;font-size:15px;color:#444;letter-spacing:-.3px">14</div>
<div class="a" style="left:0;top:584px;width:28px;height:1px;background:#c4c4c4"></div>
<div class="a" style="left:28px;top:584px;width:870px;height:1px;background:#d8d8d8"></div>
<div class="a" style="left:0;top:584px;width:28px;height:25px;line-height:26px;text-align:center;font-size:15px;color:#444;letter-spacing:-.3px">15</div>
<div class="a" style="left:0;top:609px;width:28px;height:1px;background:#c4c4c4"></div>
<div class="a" style="left:28px;top:609px;width:870px;height:1px;background:#d8d8d8"></div>
<div class="a" style="left:0;top:609px;width:28px;height:25px;line-height:26px;text-align:center;font-size:15px;color:#444;letter-spacing:-.3px">16</div>
<div class="a" style="left:0;top:634px;width:28px;height:1px;background:#c4c4c4"></div>
<div class="a" style="left:28px;top:634px;width:870px;height:1px;background:#d8d8d8"></div>
<div class="a" style="left:0;top:634px;width:28px;height:25px;line-height:26px;text-align:center;font-size:15px;color:#444;letter-spacing:-.3px">17</div>
<div class="a" style="left:0;top:659px;width:28px;height:1px;background:#c4c4c4"></div>
<div class="a" style="left:28px;top:659px;width:870px;height:1px;background:#d8d8d8"></div>
<div class="a" style="left:0;top:659px;width:28px;height:25px;line-height:26px;text-align:center;font-size:15px;color:#444;letter-spacing:-.3px">18</div>
<div class="a" style="left:0;top:684px;width:28px;height:1px;background:#c4c4c4"></div>
<div class="a" style="left:28px;top:684px;width:870px;height:1px;background:#d8d8d8"></div>
<div class="a" style="left:28px;top:234px;width:1px;height:444px;background:#a6a6a6"></div>
<div class="a" style="left:28px;top:233px;width:870px;height:1px;background:#c4c4c4"></div>
<div class="a" style="left:28px;top:259px;width:484px;height:25px;background:#efd9ea"></div>
<div class="a" style="left:368px;top:359px;width:144px;height:25px;background:#efd9ea"></div>
<div class="a" style="left:584px;top:259px;width:72px;height:25px;background:#efd9ea"></div>
<div class="bl" style="left:28px;top:259px;width:484px;height:1px"></div>
<div class="bl" style="left:28px;top:284px;width:484px;height:1px"></div>
<div class="bl" style="left:28px;top:309px;width:484px;height:1px"></div>
<div class="bl" style="left:28px;top:334px;width:484px;height:1px"></div>
<div class="bl" style="left:28px;top:359px;width:484px;height:1px"></div>
<div class="bl" style="left:367px;top:384px;width:145px;height:1px"></div>
<div class="bl" style="left:28px;top:259px;width:1px;height:101px"></div>
<div class="bl" style="left:277px;top:259px;width:1px;height:101px"></div>
<div class="bl" style="left:367px;top:259px;width:1px;height:101px"></div>
<div class="bl" style="left:421px;top:259px;width:1px;height:101px"></div>
<div class="bl" style="left:511px;top:259px;width:1px;height:101px"></div>
<div class="bl" style="left:367px;top:359px;width:1px;height:26px"></div>
<div class="bl" style="left:421px;top:359px;width:1px;height:26px"></div>
<div class="bl" style="left:511px;top:359px;width:1px;height:26px"></div>
<div class="bl" style="left:583px;top:259px;width:145px;height:1px"></div>
<div class="bl" style="left:583px;top:284px;width:145px;height:1px"></div>
<div class="bl" style="left:583px;top:259px;width:1px;height:26px"></div>
<div class="bl" style="left:655px;top:259px;width:1px;height:26px"></div>
<div class="bl" style="left:727px;top:259px;width:1px;height:26px"></div>
<div class="cell b" style="left:28px;top:234px;width:249px">品川支店　売上日報</div>
<div class="cell ctr" style="left:28px;top:259px;width:249px">商品名</div>
<div class="cell ctr" style="left:278px;top:259px;width:89px">定価</div>
<div class="cell ctr" style="left:368px;top:259px;width:53px">個数</div>
<div class="cell ctr" style="left:422px;top:259px;width:89px">売上高</div>
<div class="cell l" style="left:28px;top:284px;width:249px">シャンパーニュ紅白セット</div>
<div class="cell num" style="left:278px;top:284px;width:89px">21,600</div>
<div class="cell num" style="left:368px;top:284px;width:53px">5</div>
<div class="cell num" style="left:422px;top:284px;width:89px">108,000</div>
<div class="cell l" style="left:28px;top:309px;width:249px">北海道フレッシュチーズ詰合せ</div>
<div class="cell num" style="left:278px;top:309px;width:89px">6,800</div>
<div class="cell num" style="left:368px;top:309px;width:53px">10</div>
<div class="cell num" style="left:422px;top:309px;width:89px">68,000</div>
<div class="cell l" style="left:28px;top:334px;width:249px">スモークハム詰合せ</div>
<div class="cell num" style="left:278px;top:334px;width:89px">8,800</div>
<div class="cell num" style="left:368px;top:334px;width:53px">5</div>
<div class="cell num" style="left:422px;top:334px;width:89px">44,000</div>
<div class="cell ctr" style="left:368px;top:359px;width:53px">合計</div>
<div class="cell num" style="left:422px;top:359px;width:89px">220,000</div>
<div class="cell ctr" style="left:584px;top:259px;width:71px">合計金額</div>
<div class="cell num" style="left:656px;top:259px;width:71px">220,000</div>
<div class="a" style="left:27px;top:233px;width:252px;height:27px;border:2px solid #217346"></div>
<div class="a" style="left:274px;top:256px;width:7px;height:7px;background:#217346;border:1px solid #fff"></div>
<div class="a" style="left:897px;top:234px;width:1px;height:445px;background:#ababab"></div>
<div class="a" style="left:901px;top:212px;width:15px;height:467px;background:#dcdcdc"></div>
<div class="a" style="left:901px;top:226px;width:15px;height:372px;background:#fff;border:1px solid #ababab"></div>
<div class="a" style="left:901px;top:212px;width:15px;height:15px;background:#fff;border:1px solid #ababab"></div>
<svg class="a" style="left:905px;top:217px" width="7" height="4" viewBox="0 0 7 4"><path d="M0 4L3.500 0L7 4Z" fill="#666"/></svg>
<div class="a" style="left:901px;top:664px;width:15px;height:15px;background:#fff;border:1px solid #ababab"></div>
<svg class="a" style="left:905px;top:670px" width="7" height="4" viewBox="0 0 7 4"><path d="M0 0L3.500 4L7 0Z" fill="#666"/></svg>
<!--GRID-CONTENT-->

<!-- HELP -->
<div id="helpborder" class="a"></div>
<div id="helpwhite" class="a"></div>

<div id="helpsb" class="a"></div>
<div class="t" style="left:932px;top:226px;font-size:22px;color:#217346;line-height:24px;font-weight:400;font-family:'Liberation Sans','Noto Sans CJK JP',sans-serif"><span style="display:inline-block;transform:scaleX(.80);transform-origin:0 50%">ヘルプ</span></div>
<div class="dd" style="left:1296px;top:231px;border-width:5px 5px 0 5px;border-top-color:#666"></div>
<svg class="a" style="left:1337px;top:229px" width="10" height="10" viewBox="0 0 10 10"><path d="M1 1L9 9M9 1L1 9" stroke="#555" stroke-width="1.800" fill="none"/></svg>
<svg class="a" style="left:937px;top:278px" width="17" height="14" viewBox="0 0 17 14"><path d="M16.500 7H1.500M7 1L1.200 7L7 13" stroke="#7faa90" stroke-width="1.300" fill="none"/></svg>
<div class="a" style="left:964px;top:284px;width:2px;height:2px;background:#217346;box-shadow:5px 0 0 #217346,10px 0 0 #217346"></div>
<div class="box" style="left:991px;top:272px;width:230px;height:25px;border-color:#a6a6a6"></div>
<div class="a" style="left:1000px;top:277px;width:1px;height:16px;background:#222"></div>
<svg class="a" style="left:1201px;top:277px" width="15" height="14" viewBox="0 0 15 14"><circle cx="9.500" cy="5" r="4" fill="none" stroke="#2b66b8" stroke-width="1.600"/><path d="M6.500 8L1 13.200" stroke="#2b66b8" stroke-width="1.800" fill="none"/></svg>
<svg class="a" style="left:1338px;top:322px" width="11" height="7" viewBox="0 0 11 7"><path d="M.8 6.200L5.500 1.200L10.200 6.200" stroke="#333" stroke-width="2.200" fill="none"/></svg>
<div class="a" style="left:1336px;top:338px;width:15px;height:19px;background:#c8c8c8"></div>
<svg class="a" style="left:1338px;top:666px" width="11" height="7" viewBox="0 0 11 7"><path d="M.8 .8L5.500 5.800L10.200 .8" stroke="#333" stroke-width="2.200" fill="none"/></svg>
<div class="h" style="left:946px;top:324px;font-size:19px;line-height:21.500px;font-weight:350;letter-spacing:0;white-space:normal;width:340px;color:#333">図形に塗りつぶし (グラデーション) を<br>追加する</div>
<div class="h" style="left:946px;top:387px;line-height:16px">最後の更新された <i style="letter-spacing:0">2014-10-23</i></div>
<div class="h" style="left:946px;top:423px;line-height:16px">Excel、PowerPoint、および Word にある図形、テキスト<br>ボックス、SmartArt グラフィックにグラデーションの塗<br>りつぶしを適用できます。グラデーションの塗りつぶし<br>は、図形の表面で、ある色から別の色になめらかに変化し<br>ていく塗りつぶしです。</div>
<div class="h" style="left:946px;top:523px;line-height:16px">図形を追加する方法の詳細については、「<span class="lnk">図形を追加、変<br>更、削除する</span>」を参照してください。</div>
<div class="h" style="left:946px;top:582px;font-size:15px;line-height:18px;color:#222">この記事の内容</div>
<div class="h lnk" style="left:966px;top:619px;line-height:16px">塗りつぶし (グラデーション) の概要</div>
<div class="h lnk" style="left:966px;top:655px;line-height:16px">単純なグラデーションを図形に適用する</div>
<div class="a" style="left:919px;top:212px;width:1px;height:493px;background:#b4b4b4"></div>
<!--HELP-CONTENT-->

<!-- BOTTOM -->
<div id="tabs" class="a"></div>
<div id="status" class="a"></div>

<svg class="a" style="left:27px;top:688px" width="4" height="7" viewBox="0 0 4 7"><path d="M4 0L0 3.500L4 7Z" fill="#c0c0c0"/></svg>
<svg class="a" style="left:56px;top:688px" width="4" height="7" viewBox="0 0 4 7"><path d="M0 0L4 3.500L0 7Z" fill="#c0c0c0"/></svg>
<div class="a" style="left:100px;top:679px;width:77px;height:24px;background:#fff;border-bottom:2px solid #217346"></div>
<div class="t" style="left:112px;top:684px;font-size:13px;color:#217346;line-height:15px;font-weight:500">品川支店</div>
<div class="t" style="left:188px;top:684px;font-size:13px;color:#333;line-height:15px">新宿支店</div>
<div class="a" style="left:252px;top:682px;width:1px;height:20px;background:#ababab"></div>
<div class="t" style="left:265px;top:684px;font-size:13px;color:#333;line-height:15px">渋谷支店</div>
<div class="a" style="left:327px;top:682px;width:1px;height:20px;background:#ababab"></div>
<svg class="a" style="left:361px;top:684px" width="16" height="16" viewBox="0 0 16 16"><circle cx="8" cy="8" r="7" fill="none" stroke="#666" stroke-width="1.100"/><path d="M4.500 8H11.500M8 4.500V11.500" stroke="#666" stroke-width="1.300"/></svg>
<div class="a" style="left:551px;top:687px;width:2px;height:2px;background:#a0a0a0;box-shadow:0 4px 0 #a0a0a0,0 8px 0 #a0a0a0"></div>
<div class="a" style="left:568px;top:685px;width:332px;height:15px;background:#dcdcdc"></div>
<div class="a" style="left:568px;top:685px;width:15px;height:15px;background:#fff;border:1px solid #ababab"></div>
<svg class="a" style="left:573px;top:689px" width="4" height="7" viewBox="0 0 4 7"><path d="M4 0L0 3.500L4 7Z" fill="#555"/></svg>
<div class="a" style="left:583px;top:685px;width:266px;height:15px;background:#fff;border:1px solid #ababab"></div>
<div class="a" style="left:885px;top:685px;width:15px;height:15px;background:#fff;border:1px solid #ababab"></div>
<svg class="a" style="left:891px;top:689px" width="4" height="7" viewBox="0 0 4 7"><path d="M0 0L4 3.500L0 7Z" fill="#555"/></svg>
<!-- status -->
<div class="t" style="left:7px;top:710px;font-size:12px;color:#333;line-height:14px">準備完了</div>
<svg class="a" style="left:75px;top:710px" width="14" height="13" viewBox="0 0 14 13"><rect x="2.500" y="2.500" width="11" height="10" fill="#fff" stroke="#777" stroke-width="1"/><path d="M5 6.500H12M5 8.500H12M5 10.500H12" stroke="#777" stroke-width="1" stroke-dasharray="1 1"/><circle cx="3" cy="3" r="2.600" fill="#777"/></svg>
<div class="a" style="left:1074px;top:706px;width:38px;height:22px;background:#c6c6c6"></div>
<svg class="a" style="left:1086px;top:710px" width="13" height="12" viewBox="0 0 13 12"><path d="M.5 .5H12.500V11.500H.5ZM.5 4.500H12.500M.5 8H12.500M4.500 .5V11.500M8.500 .5V11.500" fill="none" stroke="#777" stroke-width="1"/></svg>
<svg class="a" style="left:1124px;top:710px" width="14" height="12" viewBox="0 0 14 12"><path d="M.5 .5H13.500V11.500H.5Z" fill="none" stroke="#777"/><path d="M3.500 3.500H10.500V9.500H3.500ZM5 5.500H9M5 7.500H9" fill="none" stroke="#777"/></svg>
<svg class="a" style="left:1162px;top:710px" width="14" height="12" viewBox="0 0 14 12"><path d="M.5 .5H13.500V11.500H.5ZM5.500 .5V6.500H10.500V.5" fill="none" stroke="#777"/></svg>
<div class="a" style="left:1193px;top:716px;width:6px;height:2px;background:#666"></div>
<div class="a" style="left:1203px;top:716px;width:99px;height:1px;background:#a6a6a6"></div>
<div class="a" style="left:1251px;top:711px;width:5px;height:11px;background:#777"></div>
<div class="a" style="left:1306px;top:716px;width:7px;height:2px;background:#666"></div>
<div class="a" style="left:1308px;top:713px;width:2px;height:7px;background:#666"></div>
<div class="t" style="left:1325px;top:710px;font-size:12px;color:#333;line-height:14px">100%</div>
<!--BOTTOM-CONTENT-->
</body>
</html>
